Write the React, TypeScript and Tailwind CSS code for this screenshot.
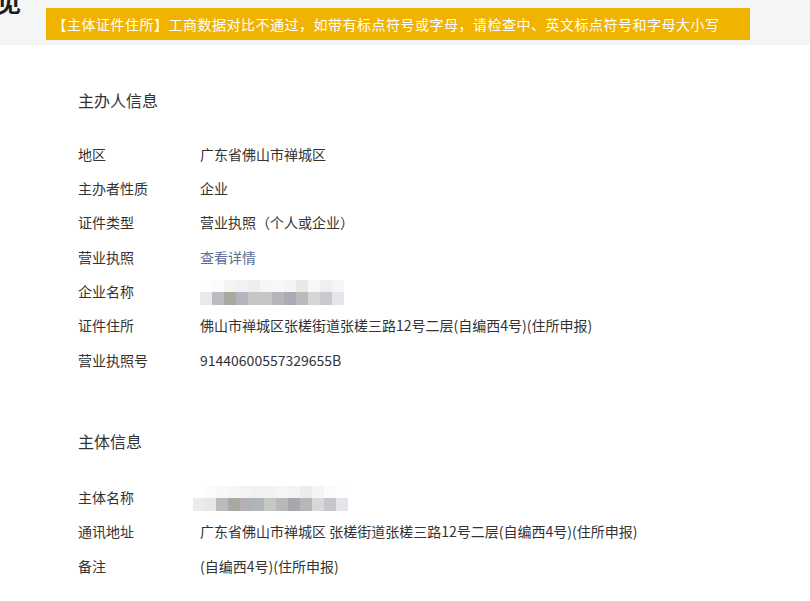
import React from "react";

const font = { fontFamily: '"Noto Sans CJK SC", "Noto Sans", sans-serif' };

function Blur({ top, bottom, lead }: { top: string[]; bottom: string[]; lead?: string }) {
  return (
    <div className="flex flex-col pt-[2px]">
      <div className="flex h-[12px]">
        {lead ? <div className="w-[11px]" /> : null}
        {top.map((c, i) => (
          <div key={i} className="w-[12px] h-[12px]" style={{ background: c }} />
        ))}
      </div>
      <div className="flex h-[13px]">
        {lead ? <div className="w-[11px]" style={{ background: lead }} /> : null}
        {bottom.map((c, i) => (
          <div key={i} className="w-[12px] h-[13px]" style={{ background: c }} />
        ))}
      </div>
    </div>
  );
}

function Row({ label, children }: { label: string; children: React.ReactNode }) {
  return (
    <div className="flex items-center h-[34.33px] text-[14px] text-[#333]">
      <div className="w-[122px] shrink-0">{label}</div>
      <div className="flex items-center">{children}</div>
    </div>
  );
}

export default function App() {
  return (
    <div className="w-[810px] h-[601px] bg-white overflow-hidden" style={font}>
      <div className="relative h-[45px] bg-[#f4f5f7] pt-[8px] pl-[46px] overflow-hidden">
        <div className="absolute left-[-3px] top-[-10px] text-[24px] leading-[24px] font-bold text-[#1f1f1f]">见</div>
        <div className="w-[704px] h-[32px] bg-[#f0b400] flex items-center justify-center pr-[24px] text-white text-[14px] tracking-[0.5px]">
          【主体证件住所】工商数据对比不通过，如带有标点符号或字母，请检查中、英文标点符号和字母大小写
        </div>
      </div>

      <div className="pl-[78px]">
        <div className="mt-[43px] h-[24px] leading-[24px] text-[16px] text-[#333]">主办人信息</div>
        <div className="mt-[25px]">
          <Row label="地区">广东省佛山市禅城区</Row>
          <Row label="主办者性质">企业</Row>
          <Row label="证件类型">营业执照（个人或企业）</Row>
          <Row label="营业执照"><span className="text-[#5b6b99]">查看详情</span></Row>
          <Row label="企业名称">
            <Blur
              top={["#fdfdfd", "#fbfbfb", "#f3f3f3", "#f1f1f1", "#eeeeee", "#f6f6f6", "#f7f7f7", "#f4f4f4", "#e8e8e8", "#f7f7f7", "#efefef", "#f5f5f5"]}
              bottom={["#e9e9e9", "#bcbbc3", "#aaa9a1", "#b5b3bd", "#c4c6c8", "#c3c6c1", "#b7b5b9", "#aea9b6", "#b8bbbb", "#d5d5d4", "#c7c9cc", "#e6e4ea"]}
            />
          </Row>
          <Row label="证件住所">佛山市禅城区张槎街道张槎三路12号二层(自编西4号)(住所申报)</Row>
          <Row label="营业执照号">91440600557329655B</Row>
        </div>

        <div className="mt-[52px] h-[24px] leading-[24px] text-[16px] text-[#333]">主体信息</div>
        <div className="mt-[27px]">
          <Row label="主体名称">
            <div className="ml-[-7px]">
              <Blur
                lead="#ececec"
                top={["#fbfbfb", "#f8f8f8", "#f6f6f6", "#f3f3f3", "#f1f1f1", "#f2f2f2", "#f5f5f5", "#f3f3f3", "#ececec", "#f4f4f4", "#fbfbfb", "#fefefe"]}
                bottom={["#e8e8e8", "#bbbbbf", "#aaa9a1", "#b4b0b8", "#b0b5b5", "#c5c8c1", "#b8b8b8", "#aaa6ae", "#b6b8b8", "#d8d8dc", "#c6c6c8", "#e5e4ea"]}
              />
            </div>
          </Row>
          <Row label="通讯地址">广东省佛山市禅城区 张槎街道张槎三路12号二层(自编西4号)(住所申报)</Row>
          <Row label="备注">(自编西4号)(住所申报)</Row>
        </div>
      </div>
    </div>
  );
}
